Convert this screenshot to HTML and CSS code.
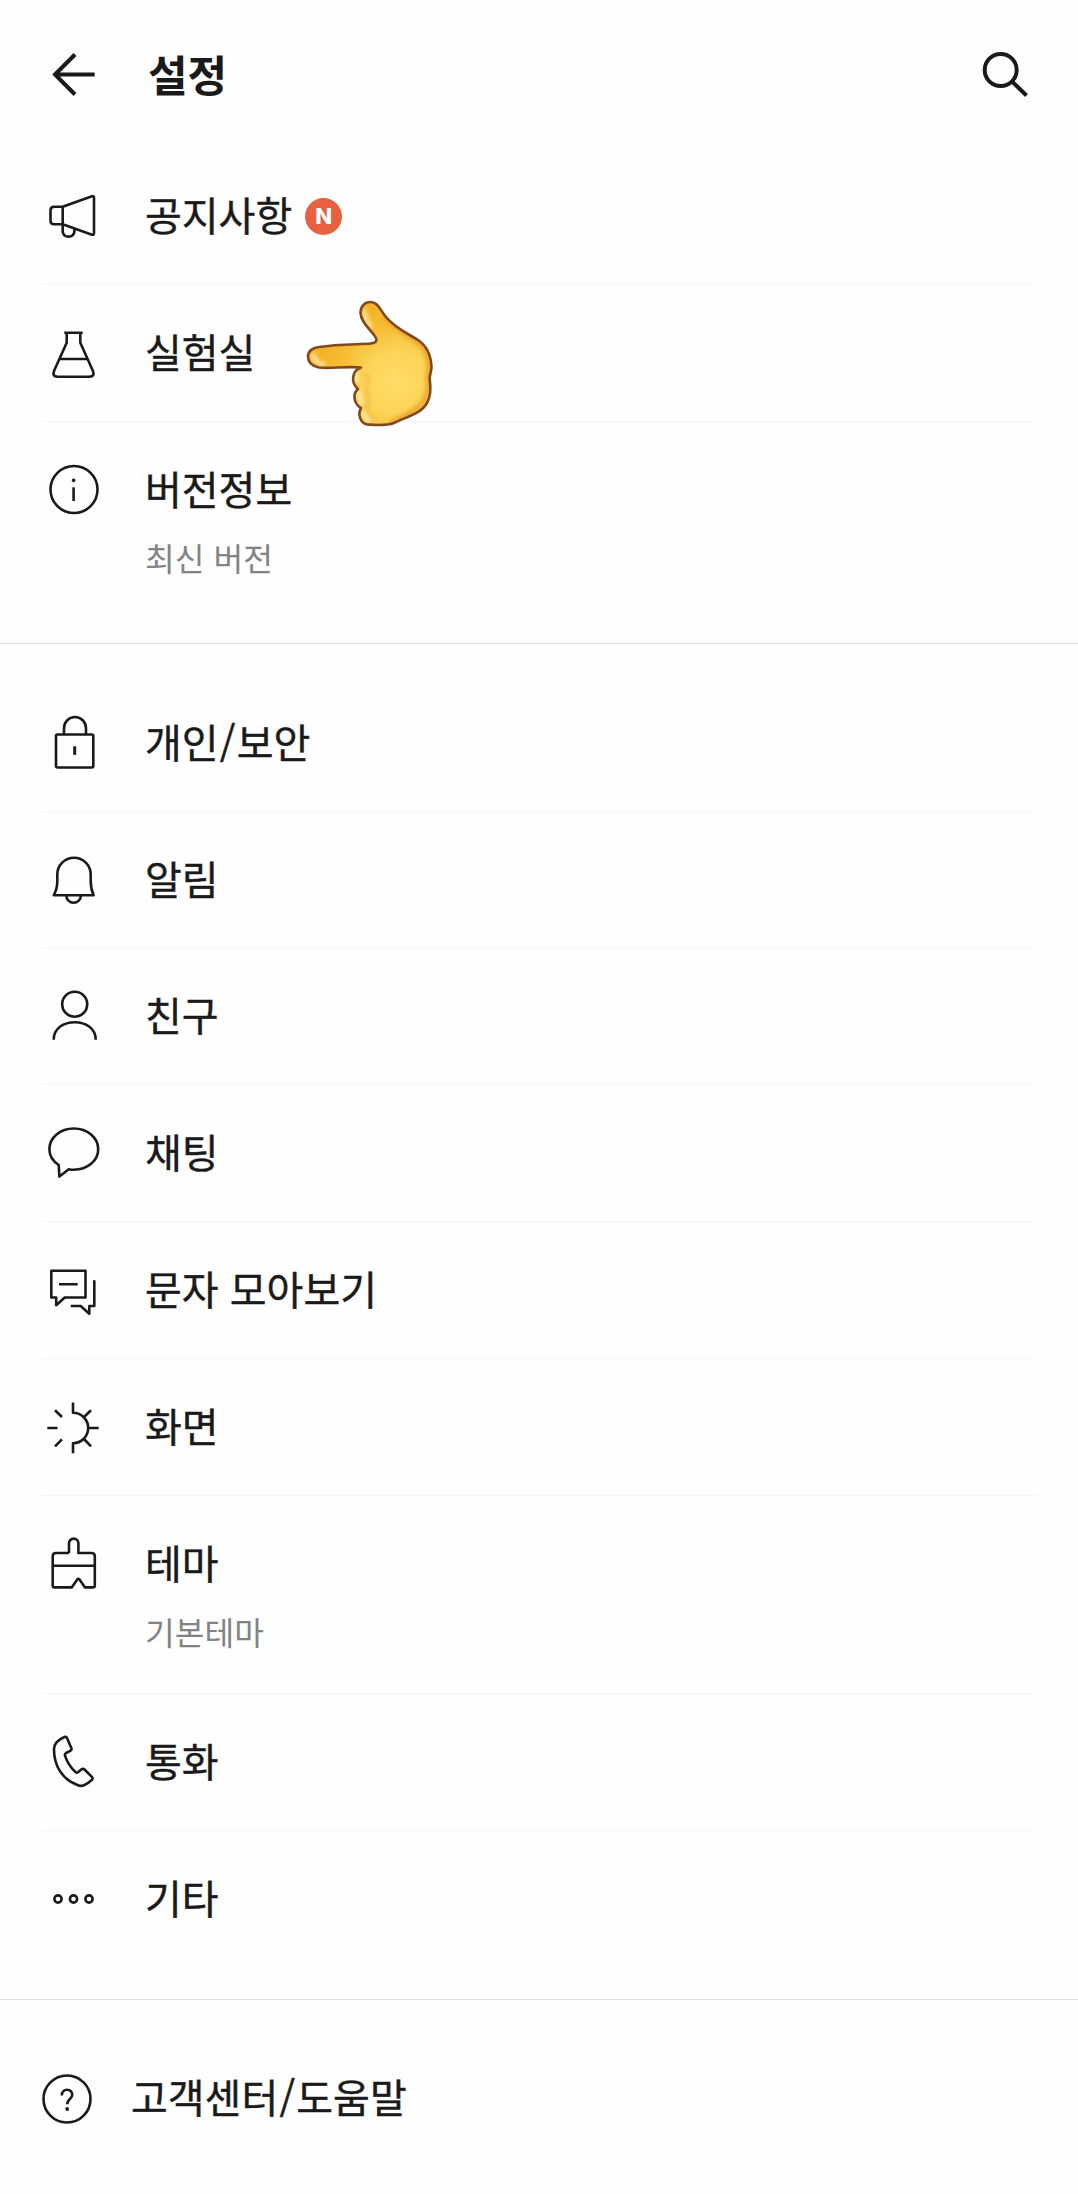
FILE: index.html
```html
<!DOCTYPE html>
<html lang="ko">
<head>
<meta charset="utf-8">
<title>설정</title>
<link rel="stylesheet" href="styles.css">
</head>
<body>
<header class="topbar">
  <svg class="icon icon-back" viewBox="0 0 60 60"><path d="M51.7 30.5H11M32 10.5L12 30.5L32 50.5"/></svg>
  <h1 class="title">설정</h1>
  <svg class="icon icon-search" viewBox="0 0 60 60"><circle cx="25.7" cy="26" r="16"/><path d="M37 37.5L51.5 51.5"/></svg>
</header>
<main>
  <ul class="group group-first">
    <li class="row">
      <svg class="icon" viewBox="0 0 60 60"><path d="M19.7 20.7H11Q7.5 20.7 7.5 24.5V34.5Q7.5 38.3 11 38.3H19.7ZM19.7 20.7L49 10.3Q51 9.6 51 11.5V47Q51 49.2 49 48.7L19.7 38.3M19.7 38.3V46A6 6 0 0 0 31.4 46V42.8"/></svg>
      <span class="label">공지사항</span><span class="badge">N</span>
    </li>
    <li class="row">
      <svg class="icon" viewBox="0 0 60 60"><path d="M21.3 9.7H39.7M23.7 9.7V19.7L11 48Q9 53.7 14.5 53.7H46.5Q52 53.7 50 48L37.3 19.7V9.7M16.7 36H44.7"/></svg>
      <span class="label">실험실</span>
      <svg class="hand" viewBox="0 0 140 135">
        <defs>
          <radialGradient id="skin" gradientUnits="userSpaceOnUse" cx="96" cy="88" r="76">
            <stop offset="0" stop-color="#ffdc6a"/><stop offset=".42" stop-color="#fcd457"/><stop offset=".75" stop-color="#f6bd35"/><stop offset="1" stop-color="#f3b42c"/>
          </radialGradient>
          <filter id="soft" x="-30%" y="-30%" width="160%" height="160%"><feGaussianBlur stdDeviation="2.2"/></filter>
          <clipPath id="palm"><path d="M19 52C38 49 58 49.5 71 48.5C77 48 78 45 74 40C69 33 61 27 60.5 18C60.5 11 65 7 70.5 7C78 7 80 15 86 22C95 33 107 38 118 45C127 51 131 61 131.5 72C131.5 77 129.5 79 129.7 84C131 93 131 101 127 108C121 119 106 122 94 128C86 131 76 130 67 129.5C60 128 57.5 119 61 113C54 109 52 99 58 94C51 88 51 76 61 72.5C45 71 30 74 19 72.5C12 71 8 67 8 61.5C8 56 13 52.5 19 52Z"/></clipPath>
        </defs>
        <path fill="url(#skin)" d="M19 52C38 49 58 49.5 71 48.5C77 48 78 45 74 40C69 33 61 27 60.5 18C60.5 11 65 7 70.5 7C78 7 80 15 86 22C95 33 107 38 118 45C127 51 131 61 131.5 72C131.5 77 129.5 79 129.7 84C131 93 131 101 127 108C121 119 106 122 94 128C86 131 76 130 67 129.5C60 128 57.5 119 61 113C54 109 52 99 58 94C51 88 51 76 61 72.5C45 71 30 74 19 72.5C12 71 8 67 8 61.5C8 56 13 52.5 19 52Z"/>
        <g clip-path="url(#palm)"><g filter="url(#soft)" fill="none" stroke-linecap="round">
          <path stroke="#e79a28" stroke-width="4" d="M85 22C95 34 116 43 124 53C132 67 128 78 128 85C129 105 124 113 92 127"/>
          <path stroke="#fff0b9" stroke-width="4" d="M13 60Q15 68 24 70M64 16Q64 24 70 31M56 78V86M59 97Q58 104 62 108M63 117Q64 123 69 126"/>
          <path stroke="#eeb03a" stroke-width="2" d="M66 78Q71 83 66 94Q69 103 66 113Q72 121 72 126"/>
        </g></g>
        <path class="hand-line" d="M19 52C38 49 58 49.5 71 48.5C77 48 78 45 74 40C69 33 61 27 60.5 18C60.5 11 65 7 70.5 7C78 7 80 15 86 22C95 33 107 38 118 45C127 51 131 61 131.5 72C131.5 77 129.5 79 129.7 84C131 93 131 101 127 108C121 119 106 122 94 128C86 131 76 130 67 129.5C60 128 57.5 119 61 113C54 109 52 99 58 94C51 88 51 76 61 72.5C45 71 30 74 19 72.5C12 71 8 67 8 61.5C8 56 13 52.5 19 52Z"/>
      </svg>
    </li>
    <li class="row row-tall">
      <svg class="icon" viewBox="0 0 60 60"><circle cx="31" cy="29.5" r="23.5"/><path d="M30.6 27.3V41"/><circle class="solid" cx="30.6" cy="20.4" r="1.8"/></svg>
      <div class="stack"><span class="label">버전정보</span><span class="sub">최신 버전</span></div>
    </li>
  </ul>
  <ul class="group group-main">
    <li class="row">
      <svg class="icon" viewBox="0 0 60 60"><rect x="13" y="21.5" width="37.3" height="33" rx="1.5"/><path d="M21 21.5V15A11 11 0 0 1 43 15V21.5"/><path class="keyhole" d="M31.7 33.3V41.8"/></svg>
      <span class="label">개인<span class="slash">/</span>보안</span>
    </li>
    <li class="row">
      <svg class="icon" viewBox="0 0 60 60"><path d="M10.8 45.2Q14.3 39 14.3 31V24.5A16.7 16.7 0 0 1 47.7 24.5V31Q47.7 39 50.6 45.2ZM23.3 45.5A7.3 7.3 0 0 0 37.9 45.5"/></svg>
      <span class="label">알림</span>
    </li>
    <li class="row">
      <svg class="icon" viewBox="0 0 60 60"><circle cx="31.7" cy="18.2" r="12.5"/><path d="M10.7 53.8C10.7 30.3 52.7 30.3 52.7 53.8"/></svg>
      <span class="label">친구</span>
    </li>
    <li class="row">
      <svg class="icon" viewBox="0 0 60 60"><path d="M15.7 42C9.5 38 6.4 32.5 6.4 26.3C6.4 14.8 17.2 5.5 30.8 5.5S55.2 14.8 55.2 26.3S44.4 46.8 30.8 46.8Q28 46.8 25.8 46.2L16.4 53.6Z"/></svg>
      <span class="label">채팅</span>
    </li>
    <li class="row">
      <svg class="icon" viewBox="0 0 60 60"><path d="M8.3 10.7H42.5V37.5H21.7L13.2 45.2V37.5H8.3ZM16 24.2H34.7M51.3 20.2V46H46.3V53.8L37.7 46H27.7"/></svg>
      <span class="label">문자 모아보기</span>
    </li>
    <li class="row">
      <svg class="icon" viewBox="0 0 60 60"><path d="M30 5.5V15.8A15.2 15.2 0 0 1 30 46.2V56.3M45.5 31H55.7M4.3 31H14.5M48 13.3L41 20M41 42L48 49.3M12 13.3L19 20M12 49.3L19 42.3"/></svg>
      <span class="label">화면</span>
    </li>
    <li class="row row-theme">
      <svg class="icon" viewBox="0 0 60 60"><path d="M26 19V9.3A4.7 4.7 0 0 1 35.4 9.3V19H48.5Q51.8 19 51.8 22.3V51.5Q51.8 53.4 50 53.4H42L36.5 45.4Q35.4 44 34.3 45.4L28.7 53.4H11.5Q9.7 53.4 9.7 51.5V22.3Q9.7 19 13 19H26M9.7 31.8H51.8"/></svg>
      <div class="stack"><span class="label">테마</span><span class="sub">기본테마</span></div>
    </li>
    <li class="row">
      <svg class="icon" viewBox="0 0 60 60"><path d="M21.5 5Q23.3 4.4 24 6L28.3 16Q29 18 27.2 18.8L23 21Q21.5 22 22.1 23.8Q25.3 33.5 32.7 40.2Q34 41.2 35.3 40.1L38.5 37.3Q40.2 36.2 41.5 37.5L48.9 44.9Q50.4 46.5 48.7 48Q45 51.5 41 53.3Q38.3 54.4 35 53.2C19 47.5 10.8 33.5 11 17Q11.2 13 13.5 10.3Q16.5 7 21.5 5Z"/></svg>
      <span class="label">통화</span>
    </li>
    <li class="row">
      <svg class="icon" viewBox="0 0 60 60"><circle cx="15" cy="30" r="3.6"/><circle cx="30.5" cy="30" r="3.6"/><circle cx="46" cy="30" r="3.6"/></svg>
      <span class="label">기타</span>
    </li>
  </ul>
  <div class="help">
    <svg class="icon" viewBox="0 0 60 60"><circle cx="30" cy="30" r="23.5"/><path d="M24.8 26.5C24.8 18.8 35.3 19 35.3 25.8C35.3 30 30.2 30.2 30.2 35.2"/><circle class="solid" cx="30.2" cy="40" r="1.9"/></svg>
    <span class="label">고객센터<span class="slash">/</span>도움말</span>
  </div>
</main>
</body>
</html>
```
FILE: styles.css
```css
* { box-sizing: border-box; }

body {
  margin: 0;
  min-height: 2194px;
  background: #fefefe;
  color: #1a1a1a;
  font-family: "Noto Sans CJK KR", "Noto Sans", sans-serif;
}

.topbar {
  display: flex;
  align-items: center;
  height: 148px;
  padding: 0 43px 0 43px;
}

.title {
  flex: 1;
  margin: 0 0 0 45px;
  padding-bottom: 3px;
  font-size: 43px;
  line-height: 60px;
  font-weight: 700;
}

.icon {
  flex: none;
  width: 60px;
  height: 60px;
  fill: none;
  stroke: #1a1a1a;
  stroke-width: 2.6;
  stroke-linejoin: round;
}

.icon-back, .icon-search { stroke-width: 4; stroke-linejoin: miter; }
.icon .solid { fill: #1a1a1a; stroke: none; }
.icon .keyhole { stroke-width: 3; }

.group {
  margin: 0;
  padding: 0 41px 0 42px;
  list-style: none;
  border-bottom: 1px solid #e0e0e0;
}

.group-first { height: 496px; }
.group-main { padding-top: 31px; height: 1356px; }

.row {
  position: relative;
  display: flex;
  align-items: center;
  height: 136.8px;
  padding-left: 1px;
  border-bottom: 1px solid #f4f4f4;
}

.row:last-child { border-bottom: 0; }

.row-tall, .row-theme { align-items: flex-start; padding-top: 38.7px; }
.row-theme { height: 198.5px; }

.label {
  margin-left: 42px;
  padding-bottom: 4px;
  font-size: 40px;
  line-height: 60px;
  white-space: nowrap;
  -webkit-text-stroke: 0.4px currentColor;
}

.slash { padding: 0 1.2px; }

.stack { display: flex; flex-direction: column; margin-top: -2.5px; }

.sub {
  margin: 10px 0 0 42px;
  font-size: 32.3px;
  line-height: 50px;
  color: #838383;
}

.badge {
  width: 37px;
  height: 37px;
  margin: 1px 0 0 13px;
  border-radius: 50%;
  background: #e66041;
  color: #fff;
  font: 800 22px/37px Inter, sans-serif;
  text-align: center;
}

.hand {
  position: absolute;
  left: 258px;
  top: 10px;
  width: 140px;
  height: 135px;
  z-index: 1;
}

.hand-line { fill: none; stroke: #81481b; stroke-width: 2.6; stroke-linejoin: round; }

.help {
  display: flex;
  align-items: center;
  height: 194px;
  padding: 4px 37px 0;
}

.help .label { margin-left: 34px; padding-bottom: 6px; }
```
